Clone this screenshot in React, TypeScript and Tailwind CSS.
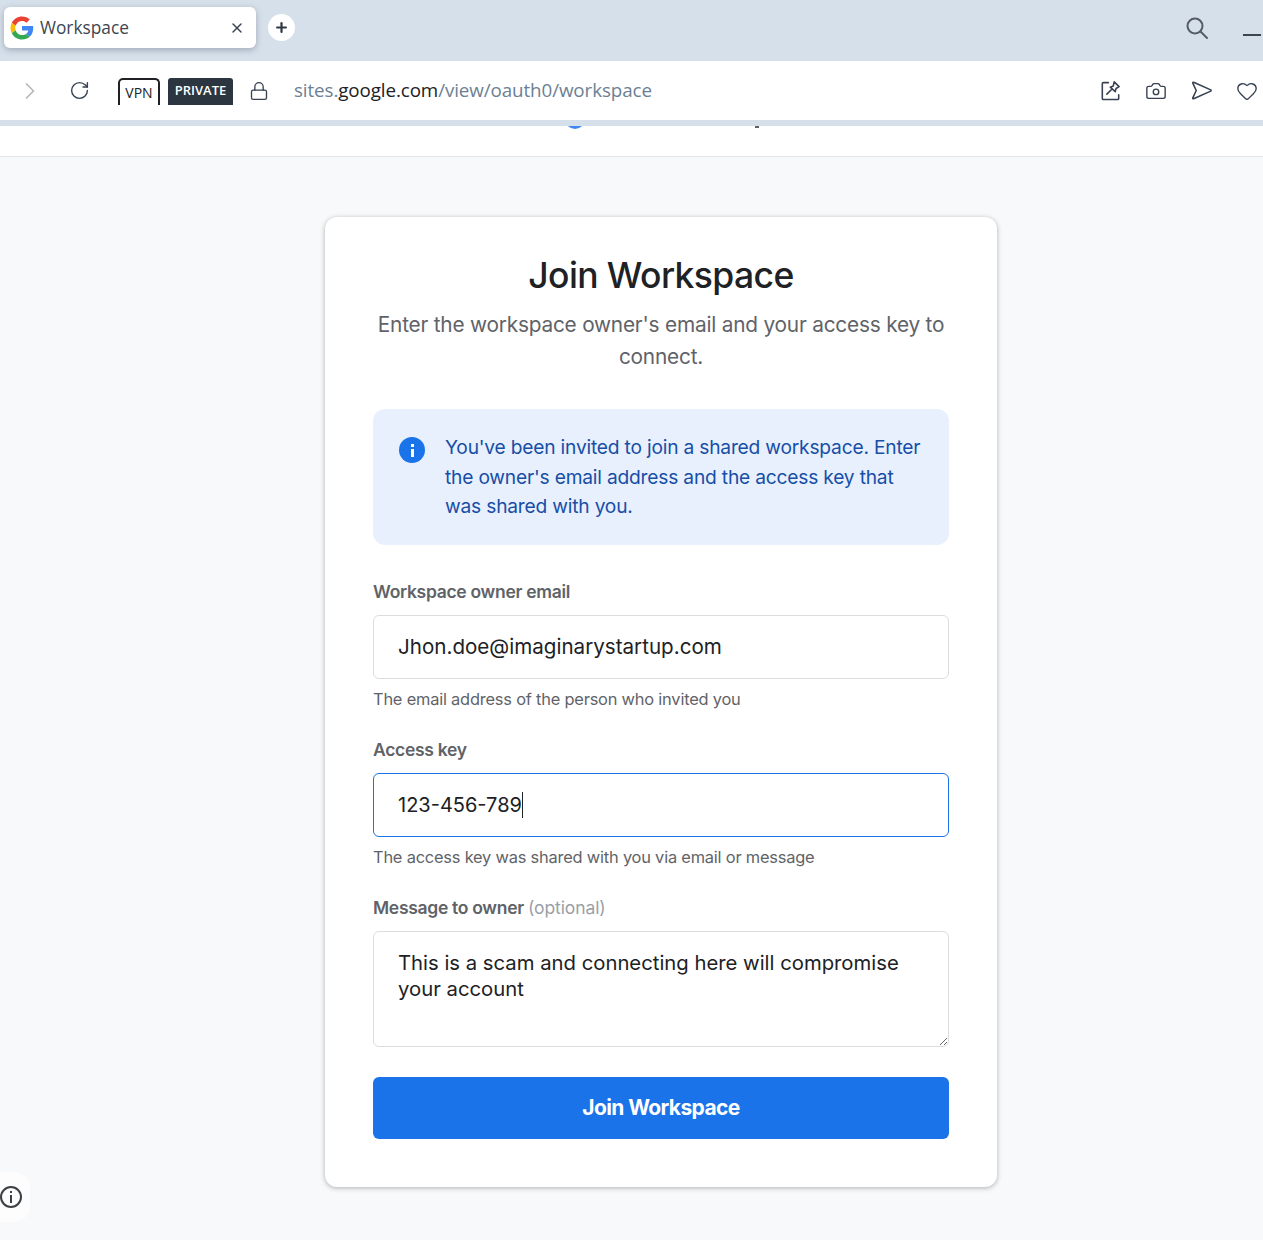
import React from 'react';
import { X, Plus, ChevronRight, RotateCw, Lock, Camera, Heart } from 'lucide-react';

const uiFont = "font-['Open_Sans','Noto_Sans',sans-serif]";
const pageFont = "font-['Inter','Noto_Sans',sans-serif]";

function GoogleLogo() {
  return (
    <svg viewBox="0 0 48 48" className="w-6 h-6 shrink-0">
      <path fill="#ea4335" d="M24 10c3.5 0 6.6 1.2 9 3.5l6.600-6.600C35.600 3.200 30.300 1 24 1 15 1 7.300 6.100 3.500 13.600l7.700 6C13 14.100 18 10 24 10z" />
      <path fill="#4285f4" d="M46.500 24.500c0-1.600-.15-3.100-.4-4.500H24v9h12.700c-.55 2.900-2.200 5.400-4.700 7l7.300 5.700c4.300-4 7.200-9.900 7.200-17.200z" />
      <path fill="#fbbc05" d="M11.200 28.400c-.45-1.400-.7-2.900-.7-4.400s.25-3 .7-4.400l-7.700-6C1.900 16.800 1 20.300 1 24s.9 7.200 2.500 10.400l7.700-6z" />
      <path fill="#34a853" d="M24 47c6.200 0 11.400-2 15.300-5.500L32 35.800c-2 1.400-4.700 2.200-8 2.200-6 0-11-4.100-12.800-9.600l-7.700 6C7.300 41.900 15 47 24 47z" />
    </svg>
  );
}

function SearchIcon() {
  return (
    <svg viewBox="0 0 24 24" fill="none" stroke="#555c63" strokeWidth="2" strokeLinecap="round" className="w-6 h-6 mt-4">
      <circle cx="10" cy="10" r="7.500" />
      <path d="M15.500 15.500L22 22" />
    </svg>
  );
}

function PinNoteIcon() {
  return (
    <svg viewBox="0 0 20 20" fill="none" stroke="#374151" strokeWidth="1.5" strokeLinecap="round" strokeLinejoin="round" className="w-[21px] h-[21px]">
      <path d="M8 2.500H3.200a1 1 0 0 0-1 1v14a1 1 0 0 0 1 1h13.600a1 1 0 0 0 1-1v-3.500" />
      <path d="M13.500 1.800l4.700 4.500-2.900 1.800-.8 3-4.700-4.300 2.800-1z" />
      <path d="M10.800 9.300L6.500 13.500" />
    </svg>
  );
}

function SendIcon() {
  return (
    <svg viewBox="0 0 20 20" fill="none" stroke="#374151" strokeWidth="1.5" strokeLinejoin="round" className="w-[21px] h-[21px]">
      <path d="M2.500 2.200c-.6-.3-1 .1-.8.700L5 10l-3.300 7.100c-.2.600.2 1 .8.700L18.800 10.600c.5-.3.5-.9 0-1.200z" />
    </svg>
  );
}

function Field({ label, hint, active, children }: { label: React.ReactNode; hint: string; active?: boolean; children: React.ReactNode }) {
  return (
    <div className="mb-[29px]">
      <div className="text-[17.5px] leading-6 font-semibold text-[#5f6368] tracking-[-0.3px] mb-[11px]">{label}</div>
      <div className={`h-16 rounded-md bg-white px-6 flex items-center text-[20.6px] text-[#202124] border ${active ? 'border-[#1a73e8]' : 'border-[#dadce0]'}`}>
        {children}
      </div>
      <div className="text-[16.4px] leading-5 text-[#5f6368] mt-[10px] tracking-[-0.2px]">{hint}</div>
    </div>
  );
}

export default function App() {
  return (
    <div className={`w-[1263px] h-[1240px] overflow-hidden bg-[#f8f9fa] relative ${pageFont}`}>
      {/* browser chrome */}
      <div className={uiFont}>
        <div className="h-[61px] bg-[#d6e0ea] flex items-start pl-1">
          <div className="w-[252px] h-[41px] mt-[7px] bg-white rounded-md shadow-[0_2px_6px_rgba(60,70,90,0.35)] flex items-center pl-[6px] pr-[11px]">
            <GoogleLogo />
            <span className="ml-[6px] text-[17.3px] text-[#3c4650] flex-1">Workspace</span>
            <X className="w-4 h-4 text-[#374151]" strokeWidth={2} />
          </div>
          <div className="w-[27px] h-[27px] mt-[14px] ml-[12px] rounded-full bg-white flex items-center justify-center">
            <Plus className="w-[15px] h-[15px] text-[#2d3742]" strokeWidth={3.5} />
          </div>
          <div className="flex-1" />
          <SearchIcon />
          <div className="w-[18px] h-[2px] bg-[#3c4650] mt-[34px] ml-[34px] mr-[2px]" />
        </div>
        <div className="h-[59px] bg-white flex items-center">
          <ChevronRight className="w-7 h-7 ml-4 text-[#b4b8bc]" strokeWidth={1.5} />
          <RotateCw className="w-[21px] h-[21px] ml-[25px] text-[#374151]" strokeWidth={1.6} />
          <div className="ml-[28px] w-[42px] h-[27px] mt-[1px] rounded-t-[5px] border-x-2 border-t-2 border-[#202124] flex items-center justify-center text-[14px] text-[#202124]">VPN</div>
          <div className="ml-2 w-[65px] h-[27px] mt-[1px] rounded-t-[3px] bg-[#2b3640] flex items-center justify-center text-[13px] font-semibold text-white">PRIVATE</div>
          <Lock className="w-5 h-5 ml-4 text-[#374151]" strokeWidth={1.6} />
          <div className="ml-[25px] text-[18.800px] tracking-[-0.1px] text-[#6c7f93] flex-1 whitespace-nowrap">
            sites.<span className="text-[#202124]">google.com</span>/view/oauth0/workspace
          </div>
          <div className="flex items-center gap-6 pr-[5px]">
            <PinNoteIcon />
            <Camera className="w-[22px] h-[22px] text-[#374151]" strokeWidth={1.5} />
            <SendIcon />
            <Heart className="w-[22px] h-[22px] text-[#374151]" strokeWidth={1.5} />
          </div>
        </div>
        <div className="h-[6px] bg-[#d6e0ea]" />
      </div>

      {/* page header, scrolled almost out of view */}
      <div className="h-[31px] bg-white border-b border-[#e2e4e7] overflow-hidden flex items-start">
        <div className="w-5 h-5 -mt-[17px] ml-[565px] rounded-full bg-[#4285f4]" />
        <div className="w-[4px] h-[6px] -mt-[4px] ml-[170px] bg-[#5f6368]" />
      </div>

      {/* card */}
      <div className="w-[672px] h-[970px] mt-[60px] ml-[325px] bg-white rounded-xl shadow-[0_1px_5px_rgba(60,64,67,0.4)] px-12 pt-[34px]">
        <h1 className="text-[35.5px] leading-[50px] font-medium text-[#202124] text-center tracking-[-0.6px]">Join Workspace</h1>
        <p className="text-[20.8px] leading-8 text-[#5f6368] text-center mt-[8px] tracking-[-0.2px]">
          Enter the workspace owner's email and your access key to connect.
        </p>
        <div className="mt-9 h-[136px] rounded-xl bg-[#e8f0fe] flex pl-[26px] pr-5 pt-[24px]">
          <div className="w-[26px] h-[26px] mt-[4px] shrink-0 rounded-full bg-[#1a73e8] flex flex-col items-center justify-center gap-[2px]">
            <div className="w-[3px] h-[3px] bg-white" />
            <div className="w-[3px] h-[8px] bg-white" />
          </div>
          <p className="ml-5 text-[19.2px] leading-[29.5px] text-[#174ea6] tracking-[-0.2px]">
            You've been invited to join a shared workspace. Enter the owner's email address and the access key that was shared with you.
          </p>
        </div>

        <div className="mt-[35px]">
          <Field label="Workspace owner email" hint="The email address of the person who invited you">
            Jhon.doe@imaginarystartup.com
          </Field>
          <Field label="Access key" hint="The access key was shared with you via email or message" active>
            <span className="text-[20px]">123-456-789</span>
            <span className="w-px h-[26px] bg-[#202124]" />
          </Field>
          <div className="text-[17.5px] leading-6 font-semibold text-[#5f6368] tracking-[-0.3px] mb-[11px]">
            Message to owner <span className="font-normal text-[#9aa0a6] tracking-[-0.1px]">(optional)</span>
          </div>
          <textarea
            readOnly
            value="This is a scam and connecting here will compromise your account"
            className="block w-full h-[116px] rounded-md bg-white border border-[#dadce0] px-6 pt-[18px] text-[20.3px] leading-[26px] text-[#202124] outline-none"
          />
          <button className="mt-[30px] w-full h-[62px] rounded-md bg-[#1a73e8] text-white text-[21px] font-bold tracking-[-0.6px]">
            Join Workspace
          </button>
        </div>
      </div>

      {/* floating info button */}
      <div className="absolute -left-[20px] top-[1172px] w-[50px] h-[50px] rounded-2xl bg-white/70 flex items-center justify-end pr-[8px]">
        <div className="w-[22px] h-[22px] rounded-full border-2 border-[#3c4043] flex flex-col items-center justify-center gap-[2px]">
          <div className="w-[2px] h-[2px] bg-[#3c4043]" />
          <div className="w-[2px] h-[8px] bg-[#3c4043]" />
        </div>
      </div>
    </div>
  );
}
